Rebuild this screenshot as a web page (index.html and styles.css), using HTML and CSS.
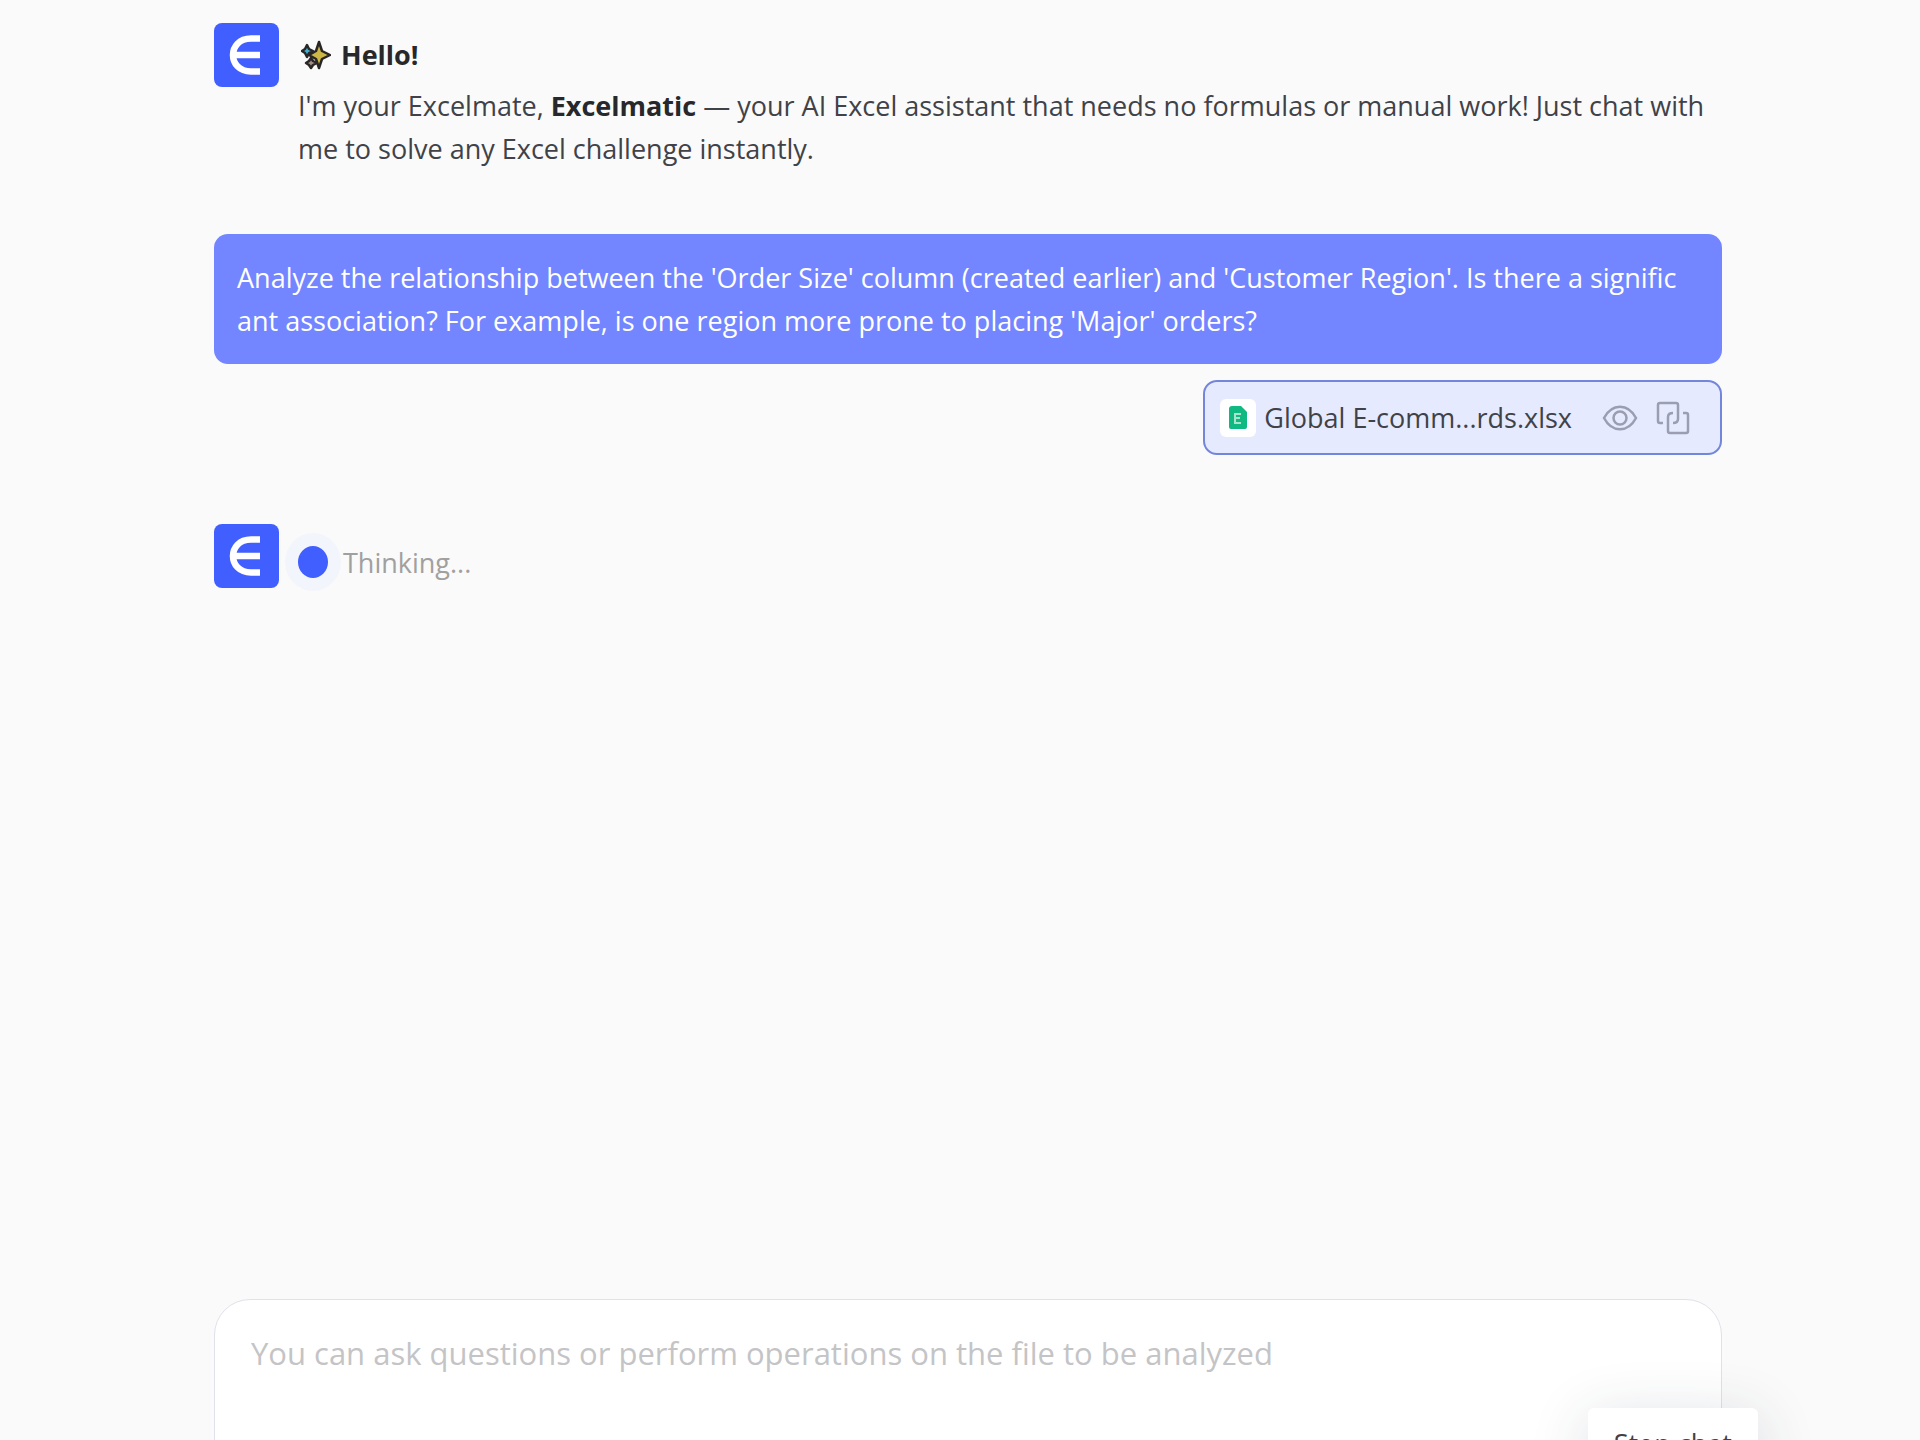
FILE: index.html
```html
<!DOCTYPE html>
<html lang="en">
<head>
    <meta charset="UTF-8">
    <meta name="viewport" content="width=device-width, initial-scale=1.0">
    <title>Excelmatic</title>
    <link rel="stylesheet" href="styles.css">
</head>
<body>
    <main class="chat">
        <section class="message">
            <svg class="avatar" viewBox="0 0 65 64" aria-hidden="true">
                <rect width="65" height="64" rx="8" fill="#415eff"/>
                <path d="M46 15.500H37C13 15.500 13 48.500 37 48.500H46M20 32H46" fill="none" stroke="#fff" stroke-width="6.500"/>
            </svg>
            <div class="message-body">
                <h2 class="greeting">
                    <svg class="sparkles" viewBox="0 0 30 30" aria-hidden="true">
                        <g stroke="#2b2626" stroke-width="2.500" stroke-linejoin="round">
                            <path d="M6 5L8 9L12 11L8 13L6 17L4 13L1 11L4 9Z" fill="#3cb4d8"/>
                            <path d="M10 18L12 21L16 23L12 25L10 28L8 25L5 23L8 21Z" fill="#a58c80"/>
                            <path d="M18 2L21 11L29 15L21 19L18 28L15 19L8 15L15 11Z" fill="#cdb845"/>
                        </g>
                    </svg>
                    Hello!
                </h2>
                <p class="intro">I'm your Excelmate, <strong>Excelmatic</strong> — your AI Excel assistant that needs no formulas or manual work! Just chat with me to solve any Excel challenge instantly.</p>
            </div>
        </section>

        <section class="question">
            <p class="bubble">Analyze the relationship between the 'Order Size' column (created earlier) and 'Customer Region'. Is there a significant association? For example, is one region more prone to placing 'Major' orders?</p>
            <div class="file">
                <span class="file-icon">
                    <svg width="18" height="26" viewBox="0 0 18 26" aria-hidden="true">
                        <path d="M3 1H12L18 7V22Q18 24 16 24H2Q0 24 0 22V4Q0 1 3 1Z" fill="#10b981"/>
                        <path d="M12 9H6V18H12M6 13H11" fill="none" stroke="#a9e4cc" stroke-width="2"/>
                    </svg>
                </span>
                <span class="file-name">Global E-comm...rds.xlsx</span>
                <button type="button" class="icon-button" aria-label="Preview">
                    <svg width="36" height="34" viewBox="0 0 36 34" fill="none" stroke="#9a9eb0" stroke-width="2.500">
                        <path d="M2 17C10 2 26 2 34 17C26 32 10 32 2 17Z"/>
                        <circle cx="18" cy="17" r="6.500"/>
                    </svg>
                </button>
                <button type="button" class="icon-button" aria-label="Copy">
                    <svg width="34" height="34" viewBox="0 0 34 34" fill="none" stroke="#9a9eb0" stroke-width="2.500">
                        <path d="M7 22H4Q2 22 2 20V4Q2 2 4 2H20Q22 2 22 4V18Q22 22 17 22"/>
                        <path d="M17 12Q12 12 12 16V30Q12 32 14 32H30Q32 32 32 30V14Q32 12 30 12H27"/>
                    </svg>
                </button>
            </div>
        </section>

        <section class="message">
            <svg class="avatar" viewBox="0 0 65 64" aria-hidden="true">
                <rect width="65" height="64" rx="8" fill="#415eff"/>
                <path d="M46 15.500H37C13 15.500 13 48.500 37 48.500H46M20 32H46" fill="none" stroke="#fff" stroke-width="6.500"/>
            </svg>
            <div class="thinking" role="status">
                <span class="pulse"></span>
                Thinking...
            </div>
        </section>
    </main>

    <form class="composer">
        <textarea class="prompt" aria-label="Message" placeholder="You can ask questions or perform operations on the file to be analyzed"></textarea>
        <div class="tooltip" role="tooltip">Stop chat</div>
    </form>
</body>
</html>
```

FILE: styles.css
```css
* {
    box-sizing: border-box;
}

body {
    font-family: "Open Sans", "Noto Sans", sans-serif;
    font-size: 27px;
    line-height: 43px;
    color: #404248;
    background-color: #fafafa;
    margin: 0;
    padding: 23px 198px 0 214px;
    display: flex;
    flex-direction: column;
    height: 100vh;
    overflow: hidden;
}

h2, p {
    margin: 0;
}

.chat {
    flex: 1;
    display: flex;
    flex-direction: column;
    gap: 64px;
}

.message {
    display: flex;
    gap: 19px;
}

.avatar {
    flex: none;
    width: 65px;
    height: 64px;
}

.message-body {
    padding-top: 10px;
}

.greeting {
    display: flex;
    align-items: center;
    gap: 10px;
    padding-left: 3px;
    margin-bottom: 8px;
    font-size: 27px;
    color: #26282c;
}

.sparkles {
    width: 30px;
    height: 30px;
}

.intro strong {
    color: #26282c;
}

.question {
    display: flex;
    flex-direction: column;
    align-items: flex-end;
    gap: 16px;
    padding-bottom: 5px;
}

.bubble {
    width: 100%;
    padding: 22px 34px 22px 23px;
    color: #fff;
    background-color: #7386ff;
    border-radius: 14px;
    word-break: break-all;
}

.file {
    display: flex;
    align-items: center;
    padding: 14px 30px 14px 15px;
    background-color: #e5eaff;
    border: 2px solid #7386dc;
    border-radius: 14px;
}

.file-icon {
    display: flex;
    align-items: center;
    justify-content: center;
    width: 36px;
    height: 38px;
    margin-right: 8px;
    background-color: #fff;
    border-radius: 6px;
}

.file-name {
    margin-right: 30px;
}

.icon-button {
    display: flex;
    padding: 0;
    background: none;
    border: none;
    cursor: pointer;
}

.icon-button + .icon-button {
    margin-left: 18px;
}

.thinking {
    display: flex;
    align-items: center;
    gap: 15px;
    padding-bottom: 4px;
    padding-top: 16px;
    color: #a0a0a0;
}

.pulse {
    width: 30px;
    height: 32px;
    background-color: #415eff;
    border-radius: 50%;
    box-shadow: 0 0 0 13px #f3f5fc;
}

.composer {
    position: relative;
    height: 141px;
}

.prompt {
    display: block;
    width: 100%;
    height: 240px;
    padding: 30px 36px;
    font-family: inherit;
    font-size: 31px;
    line-height: 46px;
    background-color: #fff;
    border: 1px solid #e0e2ea;
    border-radius: 36px;
    resize: none;
    outline: none;
}

.prompt::placeholder {
    color: #c4c4c6;
}

.tooltip {
    position: absolute;
    top: 109px;
    right: -36px;
    padding: 14px 26px;
    background-color: #fff;
    border-radius: 6px;
    box-shadow: 0 10px 60px rgba(40, 50, 80, 0.16);
}
```
